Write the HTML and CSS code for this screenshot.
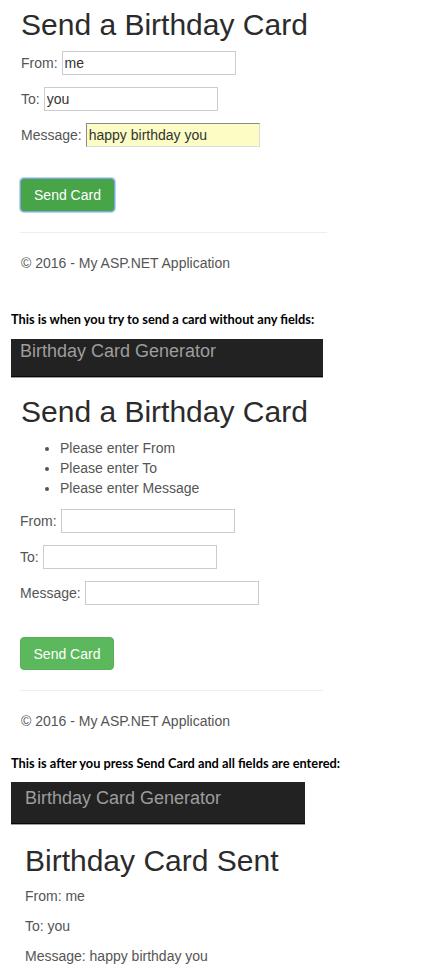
FILE: index.html
```html
<!DOCTYPE html>
<html>
<head>
<meta charset="utf-8">
<link rel="stylesheet" href="styles.css">
</head>
<body>
<div class="shot shot1">
  <h1 class="title">Send a Birthday Card</h1>
  <div class="row"><span class="label">From:</span><input class="field" type="text" value="me" readonly></div>
  <div class="row"><span class="label">To:</span><input class="field" type="text" value="you" readonly></div>
  <div class="row"><span class="label">Message:</span><input class="field field-auto" type="text" value="happy birthday you" readonly></div>
  <button class="btn btn-focus" type="button">Send Card</button>
  <hr class="rule rule1">
  <p class="footer">© 2016 - My ASP.NET Application</p>
</div>

<p class="caption caption1">This is when you try to send a card without any fields:</p>

<div class="shot shot2">
  <div class="navbar navbar1">Birthday Card Generator</div>
  <div class="body2">
    <h1 class="title title2">Send a Birthday Card</h1>
    <ul class="errors">
      <li>Please enter From</li>
      <li>Please enter To</li>
      <li>Please enter Message</li>
    </ul>
    <div class="row"><span class="label">From:</span><input class="field" type="text" value="" readonly></div>
    <div class="row"><span class="label">To:</span><input class="field" type="text" value="" readonly></div>
    <div class="row"><span class="label">Message:</span><input class="field" type="text" value="" readonly></div>
    <button class="btn btn-plain" type="button">Send Card</button>
    <hr class="rule rule2">
    <p class="footer">© 2016 - My ASP.NET Application</p>
  </div>
</div>

<p class="caption caption2">This is after you press Send Card and all fields are entered:</p>

<div class="shot shot3">
  <div class="navbar navbar2">Birthday Card Generator</div>
  <div class="body3">
    <h1 class="title title3">Birthday Card Sent</h1>
    <p class="line">From: me</p>
    <p class="line">To: you</p>
    <p class="line">Message: happy birthday you</p>
  </div>
</div>
</body>
</html>
```

FILE: styles.css
```css
html, body {
  margin: 0;
  padding: 0;
  background: #ffffff;
}

body {
  font-family: "Liberation Sans", Arial, sans-serif;
  font-size: 14px;
  line-height: 20px;
  color: #333333;
}

.shot1 {
  padding-left: 20px;
  padding-top: 8px;
}

.title {
  margin: 0;
  font-size: 30px;
  line-height: 33px;
  font-weight: normal;
  color: #2b2b2b;
  margin-left: 1px;
}

.shot1 .title {
  margin-bottom: 10px;
}

.row {
  display: flex;
  align-items: center;
  height: 24px;
  margin-bottom: 12px;
}

.label {
  color: #555555;
  margin-right: 4px;
  margin-left: 1px;
}

.field {
  box-sizing: border-box;
  width: 174px;
  height: 24px;
  margin: 0;
  padding: 0 2px;
  border: 1px solid #cccccc;
  font-family: "Liberation Sans", Arial, sans-serif;
  font-size: 14px;
  color: #333333;
  background: #ffffff;
  outline: none;
}

.field-auto {
  background: #fbfdc4;
  border-color: #8a8a8a #dcdcdc #dcdcdc #8a8a8a;
}

.btn {
  display: block;
  box-sizing: border-box;
  height: 34px;
  padding: 0 12px;
  margin: 31px 0 0 0;
  border-radius: 4px;
  font-family: "Liberation Sans", Arial, sans-serif;
  font-size: 14px;
  line-height: 20px;
  color: #ffffff;
  cursor: pointer;
}

.btn-focus {
  width: 95px;
  background: #47a447;
  border: 1px solid #7aa7e0;
  box-shadow: 0 0 0 1px rgba(110, 160, 225, 0.45);
}

.btn-plain {
  width: 94px;
  height: 33px;
  margin-top: 32px;
  background: #5cb85c;
  border: 1px solid #58b158;
}

.rule {
  border: 0;
  border-top: 1px solid #eeeeee;
  margin: 20px 0 20px 0;
  height: 0;
}

.rule1 {
  width: 307px;
}

.rule2 {
  width: 303px;
}

.footer {
  margin: 0;
  color: #555555;
  margin-left: 1px;
}

.caption {
  font-family: Lato, "Liberation Sans", sans-serif;
  font-weight: bold;
  font-size: 12.8px;
  line-height: 16px;
  color: #000000;
  margin: 0 0 0 11px;
}

.caption1 {
  margin-top: 38px;
  margin-bottom: 12px;
}

.caption2 {
  margin-top: 24px;
  margin-bottom: 11px;
}

.shot2, .shot3 {
  margin-left: 11px;
}

.navbar {
  background: #222222;
  color: #9d9d9d;
  font-size: 18px;
  line-height: 24px;
  border-bottom: 1px solid #080808;
  box-shadow: 0 1px 0 #a0a0a0;
}

.navbar1 {
  width: 312px;
  padding-left: 9px;
  box-sizing: border-box;
  height: 38px;
}

.navbar2 {
  width: 294px;
  box-sizing: border-box;
  height: 42px;
  padding-left: 14px;
  padding-top: 4px;
}

.body2 {
  padding-left: 9px;
  padding-top: 18px;
}

.errors {
  margin: 10px 0 11px 0;
  padding-left: 40px;
  color: #555555;
}

.body2 .row .label {
  margin-left: 0;
}

.body3 {
  padding-left: 14px;
  padding-top: 20px;
}

.title3 {
  margin-left: 0;
  margin-bottom: 9px;
}

.line {
  margin: 0 0 10px 0;
  color: #555555;
}
```
